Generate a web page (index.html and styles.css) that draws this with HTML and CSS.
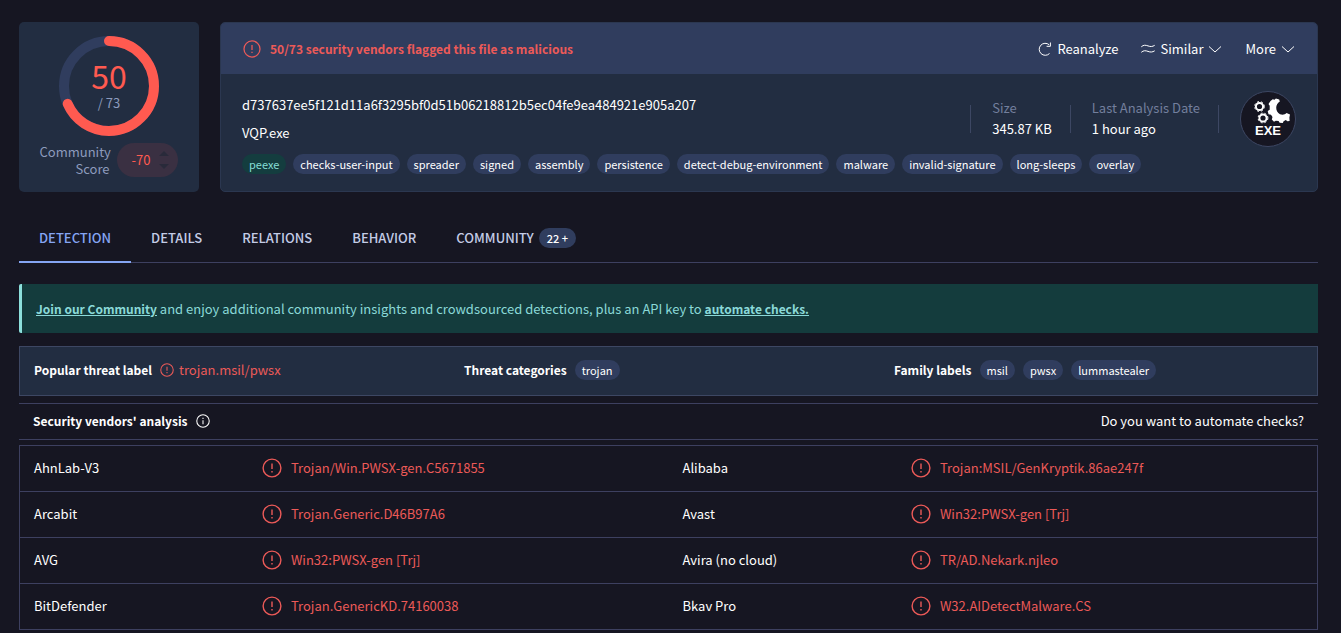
FILE: index.html
```html
<!DOCTYPE html>
<html lang="en">
<head>
    <meta charset="UTF-8">
    <meta name="viewport" content="width=device-width, initial-scale=1.0">
    <title>File report - VQP.exe</title>
    <link rel="stylesheet" href="styles.css">
</head>
<body>
    <!-- Shared icons -->
    <svg class="sprite" aria-hidden="true">
        <symbol id="icon-alert" viewBox="0 0 20 20">
            <circle cx="10" cy="10" r="8.9"/>
            <path d="M10 5.5v5.6M10 13v1.5"/>
        </symbol>
        <symbol id="icon-chevron" viewBox="0 0 14 14">
            <path d="M1 4.5L7 10l6-5.5"/>
        </symbol>
    </svg>

    <main class="page">
        <!-- Summary -->
        <div class="summary">
            <section class="card score-card">
                <div class="gauge">
                    <svg viewBox="0 0 100 100" aria-hidden="true">
                        <circle class="gauge-track" cx="50" cy="50" r="45"/>
                        <circle class="gauge-value" cx="50" cy="50" r="45" pathLength="73" stroke-dasharray="50 73" transform="rotate(-90 50 50)"/>
                    </svg>
                    <div class="gauge-text">
                        <span class="positives">50</span>
                        <span class="total">/ 73</span>
                    </div>
                </div>
                <div class="community">
                    <span class="community-label">Community Score</span>
                    <div class="votes">
                        <span>-70</span>
                        <div class="vote-buttons">
                            <button type="button" aria-label="Vote up"><svg viewBox="0 0 10 5"><path d="M0 5L5 0l5 5z"/></svg></button>
                            <button type="button" aria-label="Vote down"><svg viewBox="0 0 10 5"><path d="M0 0l5 5 5-5z"/></svg></button>
                        </div>
                    </div>
                </div>
            </section>

            <section class="card file-card">
                <header class="file-header">
                    <svg class="icon icon-medium red"><use href="#icon-alert"/></svg>
                    <strong class="verdict">50/73 security vendors flagged this file as malicious</strong>
                    <div class="actions">
                        <button type="button">
                            <svg class="icon icon-small" viewBox="0 0 14 14"><path d="M11.2 2.8A6 6 0 1 0 11.5 11.5M12.4 .5v3.8H8.6"/></svg>
                            Reanalyze
                        </button>
                        <button type="button">
                            <svg class="icon icon-small" viewBox="0 0 14 14"><path d="M.3 4.8C2.5 2.8 4.6 3 7 3.9s4.4.9 6.7-.6M.3 10.3C2.5 8.3 4.6 8.5 7 9.4s4.4.9 6.7-.6"/></svg>
                            Similar
                            <svg class="icon icon-small"><use href="#icon-chevron"/></svg>
                        </button>
                        <button type="button">
                            More
                            <svg class="icon icon-small"><use href="#icon-chevron"/></svg>
                        </button>
                    </div>
                </header>
                <div class="file-body">
                    <div class="file-top">
                        <div class="file-names">
                            <div>d737637ee5f121d11a6f3295bf0d51b06218812b5ec04fe9ea484921e905a207</div>
                            <div>VQP.exe</div>
                        </div>
                        <div class="facts">
                            <div class="fact"><span>Size</span>345.87 KB</div>
                            <div class="fact"><span>Last Analysis Date</span>1 hour ago</div>
                            <div class="file-type">
                                <svg viewBox="0 0 44 26" aria-hidden="true">
                                    <g class="gear">
                                        <circle cx="13.5" cy="8.5" r="3.6"/>
                                        <circle cx="17" cy="20" r="3.6"/>
                                    </g>
                                    <g class="gear-teeth">
                                        <circle cx="13.5" cy="8.5" r="4.9"/>
                                        <circle cx="17" cy="20" r="4.9"/>
                                    </g>
                                    <path d="M24.5 3l2.2-1.8 1.8.6L29.9.5l3.3.9.6 2C29 6 29 14 34 16.2c2.5 1 5 .4 6.5-1.2l3.5 1.4-.6 3 .2 3.6-2.2.3-1.6-1.3-2.2 1.2-.8 1.8-3.2-.3-1-1.8-2.8-.2-1.8 1-2.2-2.3.7-2.3-1.5-2.4-2.5-.5-.8-3.2 2-1.3V7.8L22.5 6z"/>
                                </svg>
                                <span>EXE</span>
                            </div>
                        </div>
                    </div>
                    <div class="tags">
                        <a href="#" class="tag tag-green">peexe</a>
                        <a href="#" class="tag">checks-user-input</a>
                        <a href="#" class="tag">spreader</a>
                        <a href="#" class="tag">signed</a>
                        <a href="#" class="tag">assembly</a>
                        <a href="#" class="tag">persistence</a>
                        <a href="#" class="tag">detect-debug-environment</a>
                        <a href="#" class="tag">malware</a>
                        <a href="#" class="tag">invalid-signature</a>
                        <a href="#" class="tag">long-sleeps</a>
                        <a href="#" class="tag">overlay</a>
                    </div>
                </div>
            </section>
        </div>

        <!-- Tabs -->
        <nav class="tabs">
            <a href="#" class="active">DETECTION</a>
            <a href="#">DETAILS</a>
            <a href="#">RELATIONS</a>
            <a href="#">BEHAVIOR</a>
            <a href="#">COMMUNITY <span class="count">22 +</span></a>
        </nav>

        <!-- Join banner -->
        <p class="banner"><a href="#">Join our Community</a> and enjoy additional community insights and crowdsourced detections, plus an API key to <a href="#">automate checks.</a></p>

        <!-- Threat labels -->
        <section class="threats">
            <div class="threat">
                <strong>Popular threat label</strong>
                <span class="threat-name red"><svg class="icon icon-small"><use href="#icon-alert"/></svg>trojan.msil/pwsx</span>
            </div>
            <div class="threat">
                <strong>Threat categories</strong>
                <span class="tag">trojan</span>
            </div>
            <div class="threat">
                <strong>Family labels</strong>
                <span class="tag">msil</span>
                <span class="tag">pwsx</span>
                <span class="tag">lummastealer</span>
            </div>
        </section>

        <!-- Detections -->
        <div class="vendors-header">
            <h2>Security vendors' analysis</h2>
            <svg class="icon icon-small" viewBox="0 0 20 20"><circle cx="10" cy="10" r="8.9"/><path d="M10 8.8v5.7M10 5.5v1.5"/></svg>
            <a href="#">Do you want to automate checks?</a>
        </div>
        <table class="vendors">
            <tbody>
                <tr>
                    <th scope="row">AhnLab-V3</th>
                    <td><div class="result"><svg class="icon"><use href="#icon-alert"/></svg>Trojan/Win.PWSX-gen.C5671855</div></td>
                    <th scope="row">Alibaba</th>
                    <td><div class="result"><svg class="icon"><use href="#icon-alert"/></svg>Trojan:MSIL/GenKryptik.86ae247f</div></td>
                </tr>
                <tr>
                    <th scope="row">Arcabit</th>
                    <td><div class="result"><svg class="icon"><use href="#icon-alert"/></svg>Trojan.Generic.D46B97A6</div></td>
                    <th scope="row">Avast</th>
                    <td><div class="result"><svg class="icon"><use href="#icon-alert"/></svg>Win32:PWSX-gen [Trj]</div></td>
                </tr>
                <tr>
                    <th scope="row">AVG</th>
                    <td><div class="result"><svg class="icon"><use href="#icon-alert"/></svg>Win32:PWSX-gen [Trj]</div></td>
                    <th scope="row">Avira (no cloud)</th>
                    <td><div class="result"><svg class="icon"><use href="#icon-alert"/></svg>TR/AD.Nekark.njleo</div></td>
                </tr>
                <tr>
                    <th scope="row">BitDefender</th>
                    <td><div class="result"><svg class="icon"><use href="#icon-alert"/></svg>Trojan.GenericKD.74160038</div></td>
                    <th scope="row">Bkav Pro</th>
                    <td><div class="result"><svg class="icon"><use href="#icon-alert"/></svg>W32.AIDetectMalware.CS</div></td>
                </tr>
            </tbody>
        </table>
    </main>
</body>
</html>
```
FILE: styles.css
```css
* {
    box-sizing: border-box;
}
body {
    margin: 0;
    background: #161622;
    color: #fff;
    font-family: "Noto Sans CJK SC", "Noto Sans", sans-serif;
    font-size: 13px;
    line-height: 20px;
}
a {
    color: inherit;
    text-decoration: none;
}
strong {
    font-size: 12px;
}
button {
    padding: 0;
    border: none;
    background: none;
    color: inherit;
    font: inherit;
    cursor: pointer;
}
.sprite {
    display: none;
}
.icon {
    flex: none;
    width: 20px;
    height: 20px;
    fill: none;
    stroke: currentColor;
    stroke-width: 1.4;
}
.icon-medium {
    width: 18px;
    height: 18px;
}
.icon-small {
    width: 14px;
    height: 14px;
    stroke-width: 1.5;
}
.red {
    color: #ec5a58;
}
.page {
    padding: 22px 23px 0 19px;
}

/* Summary */
.summary {
    display: flex;
    gap: 21px;
}
.card {
    background: #222d41;
    border-radius: 5px;
    overflow: hidden;
}
.score-card {
    display: flex;
    flex-direction: column;
    align-items: center;
    flex: none;
    width: 180px;
    padding: 14px 0;
}
.gauge {
    display: grid;
    width: 100px;
    height: 100px;
}
.gauge > * {
    grid-area: 1 / 1;
}
.gauge circle {
    fill: none;
    stroke-width: 10;
}
.gauge-track {
    stroke: #303d5e;
}
.gauge-value {
    stroke: #ff5a50;
    stroke-linecap: round;
}
.gauge-text {
    display: flex;
    flex-direction: column;
    justify-content: center;
    align-items: center;
    padding-bottom: 2px;
}
.positives {
    color: #ff5a50;
    font-size: 32px;
    line-height: 36px;
}
.total {
    color: #8d9bbd;
}
.community {
    display: flex;
    align-items: center;
    gap: 7px;
    margin-top: 7px;
}
.community-label {
    width: 70px;
    color: #8d9bbd;
    line-height: 17px;
    text-align: right;
}
.votes {
    display: flex;
    align-items: center;
    gap: 9px;
    height: 34px;
    padding: 0 9px 0 15px;
    border-radius: 17px;
    background: #3a3042;
    color: #ff5a50;
}
.vote-buttons {
    display: flex;
    flex-direction: column;
    gap: 8px;
}
.vote-buttons svg {
    display: block;
    width: 10px;
    height: 5px;
    fill: #292a3a;
}
.file-card {
    flex: 1;
    border: 1px solid #2b3750;
}
.file-header {
    display: flex;
    align-items: center;
    gap: 9px;
    height: 51px;
    padding: 0 22px;
    background: #303d5e;
}
.verdict {
    color: #ec5a58;
}
.actions {
    display: flex;
    gap: 23px;
    margin-left: auto;
}
.actions button {
    display: flex;
    align-items: center;
    gap: 5px;
}
.actions .icon {
    stroke-width: 1;
}
.file-body {
    padding: 17px 21px;
}
.file-top {
    display: flex;
    justify-content: space-between;
}
.file-names {
    display: flex;
    flex-direction: column;
    gap: 8px;
    padding-top: 4px;
}
.facts {
    display: flex;
    align-items: center;
}
.fact {
    display: flex;
    flex-direction: column;
    justify-content: center;
    height: 28px;
    padding: 0 18px 2px 21px;
    border-left: 1px solid #3d4763;
    line-height: 21px;
}
.fact:nth-child(2) {
    margin-right: 21px;
    border-right: 1px solid #3d4763;
}
.fact span {
    color: #737f9d;
}
.file-type {
    display: flex;
    flex-direction: column;
    align-items: center;
    justify-content: center;
    width: 56px;
    height: 56px;
    padding-bottom: 2px;
    border: 1px solid #3d4763;
    border-radius: 50%;
    background: #161622;
    font-family: "Liberation Sans", sans-serif;
    font-weight: bold;
    line-height: 14px;
}
.file-type svg {
    width: 44px;
    height: 26px;
    fill: #fff;
}
.gear circle,
.gear-teeth circle {
    fill: none;
    stroke: #fff;
    stroke-width: 2;
}
.gear-teeth circle {
    stroke-width: 1;
    stroke-dasharray: 2 2;
}
.tags {
    display: flex;
    gap: 7px;
    margin-top: 7px;
}
.tag {
    padding: 0 7px;
    border-radius: 10px;
    background: #303d5e;
    font-size: 11px;
}
.tag-green {
    background: #143d3f;
    color: #86dfd6;
}

/* Tabs */
.tabs {
    display: flex;
    height: 50px;
    margin-top: 21px;
    border-bottom: 1px solid #3d4060;
    color: #c3cce6;
    font-weight: 500;
}
.tabs a {
    display: flex;
    align-items: center;
    gap: 5px;
    height: 50px;
    padding: 2px 20px 0;
    border-bottom: 2px solid transparent;
}
.tabs .active {
    border-color: #85a5f3;
    color: #85a5f3;
}
.count {
    padding: 0 8px;
    border-radius: 10px;
    background: #303d5e;
    color: #fff;
    font-size: 11px;
}

/* Banner */
.banner {
    margin: 21px 0 13px;
    padding: 15px 14px 14px;
    border-left: 3px solid #8ce0dc;
    border-radius: 2px 0 0 2px;
    background: #143c3d;
    color: #8ad9d8;
}
.banner a {
    font-size: 12px;
    font-weight: bold;
    text-decoration: underline;
}

/* Threat labels */
.threats {
    display: grid;
    grid-template-columns: repeat(3, 1fr);
    gap: 7px;
    padding: 13px 0 15px 14px;
    border: 1px solid #3d4763;
    background: #222d41;
}
.threat {
    display: flex;
    align-items: center;
    gap: 8px;
}
.threat-name {
    display: flex;
    align-items: center;
    gap: 5px;
}

/* Vendors */
.vendors-header {
    display: flex;
    align-items: center;
    gap: 9px;
    height: 37px;
    margin: 7px 0 5px;
    padding: 0 14px 2px;
    border-top: 1px solid #3d4060;
    border-bottom: 1px solid #3d4060;
}
.vendors-header h2 {
    margin: 0;
    font-size: 12px;
}
.vendors-header a {
    margin-left: auto;
}
.vendors {
    width: 100%;
    border: 1px solid #3d4060;
    border-collapse: collapse;
    table-layout: fixed;
}
.vendors th,
.vendors td {
    height: 46px;
    padding: 0 14px 2px;
    border-bottom: 1px solid #3d4060;
    font-weight: normal;
    text-align: left;
}
.vendors th {
    width: 17.6%;
}
.result {
    display: flex;
    align-items: center;
    gap: 9px;
    color: #ec5a58;
}
```
